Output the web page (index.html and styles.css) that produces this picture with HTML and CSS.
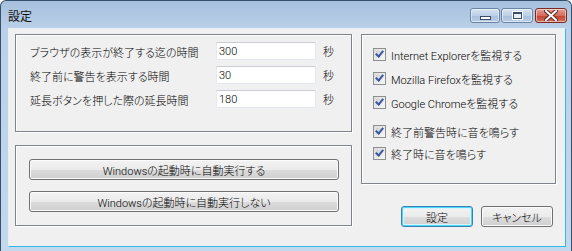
FILE: index.html
```html
<!DOCTYPE html>
<html lang="ja">
<head>
    <meta charset="UTF-8">
    <title>設定</title>
    <link rel="stylesheet" href="styles.css">
</head>
<body>
<div class="window">
    <div class="titlebar">
        <span class="title">設定</span>
        <div class="caption">
            <span class="cap cap-min"><i></i></span>
            <span class="cap cap-max"><i></i></span>
            <span class="cap cap-close">
                <svg width="14" height="11" viewBox="0 0 14 11">
                    <path d="M2 1 L12 10 M12 1 L2 10" stroke="#5a2a22" stroke-width="4" stroke-linecap="square"/>
                    <path d="M2 1 L12 10 M12 1 L2 10" stroke="#ffffff" stroke-width="2" stroke-linecap="square"/>
                </svg>
            </span>
        </div>
    </div>
    <div class="client">
        <div class="col-left">
            <div class="group times">
                <div class="row">
                    <span class="label">ブラウザの表示が終了する迄の時間</span>
                    <input type="text" value="300">
                    <span class="unit">秒</span>
                </div>
                <div class="row">
                    <span class="label">終了前に警告を表示する時間</span>
                    <input type="text" value="30">
                    <span class="unit">秒</span>
                </div>
                <div class="row row-gap">
                    <span class="label">延長ボタンを押した際の延長時間</span>
                    <input type="text" value="180">
                    <span class="unit">秒</span>
                </div>
            </div>
            <div class="group startup">
                <button class="btn">Windowsの起動時に自動実行する</button>
                <button class="btn">Windowsの起動時に自動実行しない</button>
            </div>
        </div>
        <div class="col-right">
            <div class="group checks">
                <label class="check"><span class="box"></span>Internet Explorerを監視する</label>
                <label class="check"><span class="box"></span>Mozilla Firefoxを監視する</label>
                <label class="check check-sep"><span class="box"></span>Google Chromeを監視する</label>
                <label class="check"><span class="box"></span>終了前警告時に音を鳴らす</label>
                <label class="check"><span class="box"></span>終了時に音を鳴らす</label>
            </div>
            <div class="actions">
                <button class="btn btn-default">設定</button>
                <button class="btn">キャンセル</button>
            </div>
        </div>
    </div>
</div>
</body>
</html>
```

FILE: styles.css
```css
html, body {
    margin: 0;
    padding: 0;
}
body {
    font-family: Roboto, "Noto Sans CJK JP", sans-serif;
    font-size: 11px;
    font-weight: 300;
    font-feature-settings: "palt";
    color: #000000;
    background: #ffffff;
}
.window {
    width: 572px;
    height: 251px;
    box-sizing: border-box;
    border: 1px solid #34506c;
    border-bottom: none;
    border-radius: 6px 6px 0 0;
    background: linear-gradient(#a7c0dd, #bcd1e9 30px, #c3d7ed);
    padding: 0 5px 4px 7px;
    display: flex;
    flex-direction: column;
}
.titlebar {
    height: 27px;
    display: flex;
    align-items: center;
    margin-right: -1px;
}
.title {
    font-size: 12px;
    font-weight: 400;
    padding-top: 1px;
    color: #101010;
}
.caption {
    margin-left: auto;
    display: flex;
    gap: 1px;
    margin-top: 2px;
}
.cap {
    height: 13px;
    width: 28px;
    border: 1px solid #6a84a5;
    border-radius: 3px;
    background: linear-gradient(#d7e4f3, #bccfe6 50%, #a9c0dc 51%, #b8cde6);
    box-shadow: inset 0 0 0 1px rgba(255, 255, 255, 0.5);
    display: flex;
    align-items: center;
    justify-content: center;
}
.cap-max {
    width: 30px;
    margin-right: 1px;
}
.cap-min i {
    width: 9px;
    height: 2px;
    border: 1px solid #3a4e68;
    background: #ffffff;
    margin-top: 5px;
}
.cap-max i {
    width: 7px;
    height: 4px;
    border: 1px solid #3a4e68;
    border-top-width: 2px;
    background: #e6eef8;
    box-shadow: 0 0 0 1px #ffffff;
}
.cap-close {
    width: 30px;
    border-color: #7a2a22;
    background: linear-gradient(#e4a096, #d46c5c 50%, #c3412d 51%, #d0705c);
}
.client {
    flex: 1;
    background: #f0f0f0;
    border: 1px solid #e8eef6;
    border-bottom-color: #2fb8e8;
    border-right-color: #2fb8e8;
    display: flex;
    padding: 5px 0 0 6px;
}
.col-left {
    width: 337px;
    display: flex;
    flex-direction: column;
}
.col-right {
    width: 195px;
    margin-left: 9px;
    display: flex;
    flex-direction: column;
}
.group {
    box-sizing: border-box;
    border: 1px solid #7f848c;
    box-shadow: 1px 1px 0 #ffffff, inset 1px 1px 0 #ffffff;
}
.times {
    height: 98px;
    padding: 7px 0 0 14px;
}
.row {
    display: flex;
    align-items: center;
    height: 18px;
    margin-bottom: 6px;
}
.row-gap {
    margin-top: 4px;
}
.label {
    width: 186px;
    padding-top: 2px;
}
.row input {
    box-sizing: border-box;
    width: 100px;
    height: 18px;
    margin: 0;
    border: 1px solid #e3e9ef;
    border-top-color: #c9cdd3;
    background: #ffffff;
    font: inherit;
    padding: 1px 2px 0;
}
.unit {
    margin-left: 7px;
}
.startup {
    height: 81px;
    margin-top: 13px;
    padding: 13px 12px 0 13px;
    display: flex;
    flex-direction: column;
    gap: 11px;
}
.btn {
    box-sizing: border-box;
    height: 21px;
    margin: 0;
    padding: 0;
    border: 1px solid #707070;
    border-radius: 3px;
    background: linear-gradient(#f2f2f2, #ebebeb 50%, #dddddd 51%, #cfcfcf);
    box-shadow: inset 0 0 0 1px #fbfbfb;
    font: inherit;
    color: #000000;
}
.checks {
    height: 150px;
    padding: 13px 0 0 11px;
}
.check {
    display: flex;
    align-items: center;
    height: 13px;
    margin-bottom: 11px;
}
.check-sep {
    margin-bottom: 16px;
}
.check:nth-child(4) {
    margin-bottom: 9px;
}
.box {
    box-sizing: border-box;
    width: 13px;
    height: 13px;
    border: 1px solid #8e8f8f;
    background: linear-gradient(135deg, #dcdcdc, #f6f6f6);
    margin-right: 5px;
    position: relative;
}
.box:before {
    content: '';
    position: absolute;
    left: 2px;
    top: 2px;
    width: 7px;
    height: 7px;
    background: linear-gradient(135deg, #cbcfd5, #f4f4f4);
}
.box:after {
    content: '';
    position: absolute;
    left: 3px;
    top: 0;
    width: 3px;
    height: 6px;
    border: solid #3b56a0;
    border-width: 0 2px 2px 0;
    transform: rotate(40deg);
}
.actions {
    display: flex;
    gap: 8px;
    margin-top: 22px;
    padding-left: 40px;
}
.actions .btn {
    width: 72px;
}
.btn-default {
    border-color: #3c7fb1;
    box-shadow: inset 0 0 0 1px #48d8fb, inset 0 0 0 2px #d9f4fc;
}
```
